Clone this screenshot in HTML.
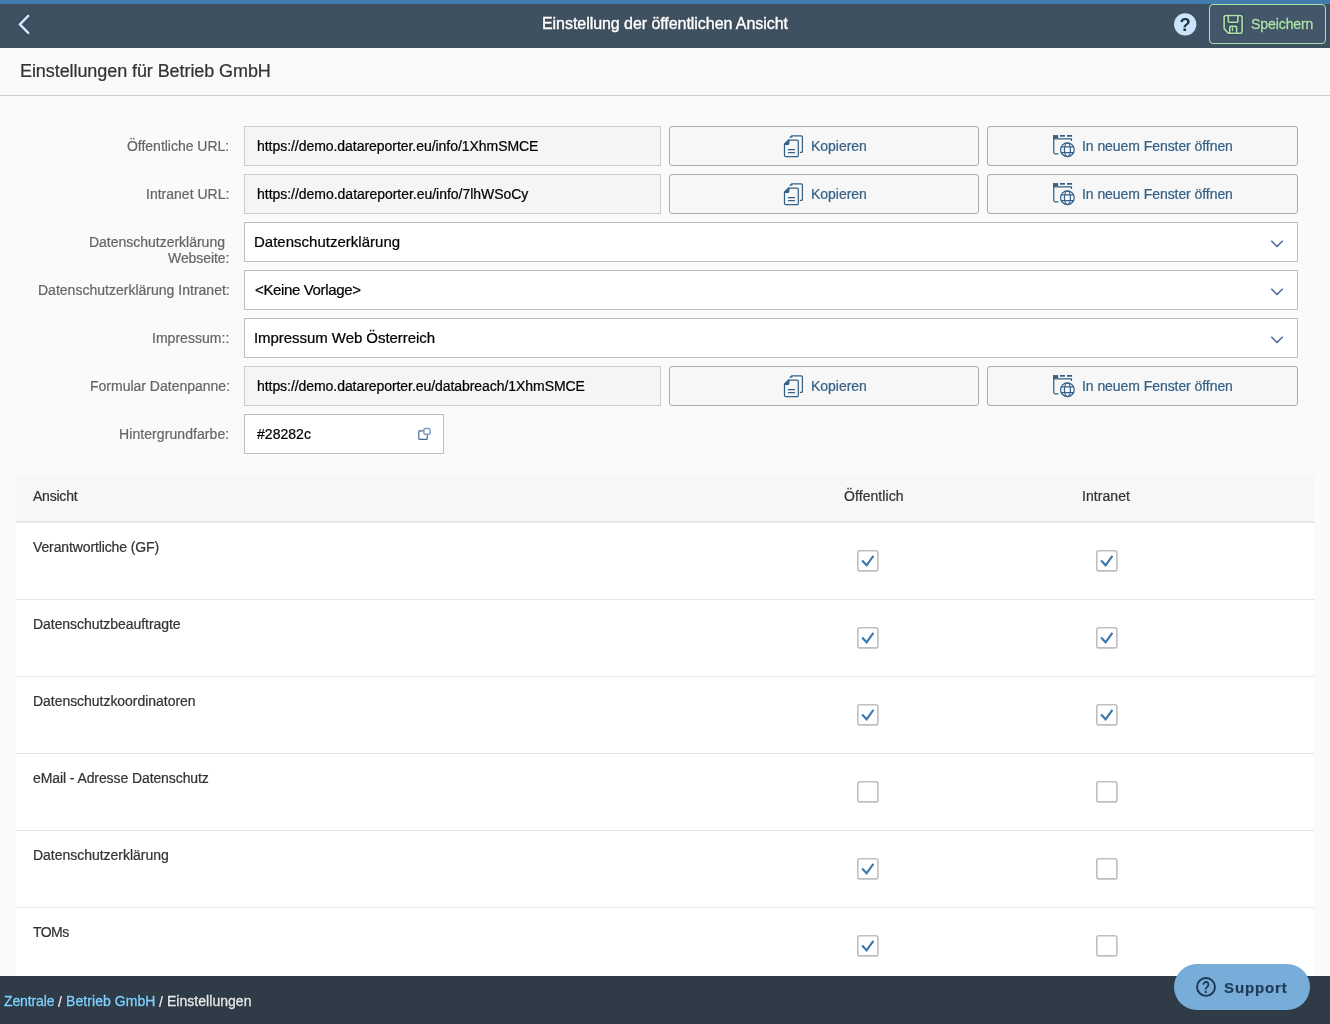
<!DOCTYPE html>
<html lang="de">
<head>
<meta charset="utf-8">
<title>Einstellung der öffentlichen Ansicht</title>
<style>
*{box-sizing:border-box;margin:0;padding:0}
html,body{width:1330px;height:1024px;overflow:hidden;background:#fafafa;font-family:"Liberation Sans",sans-serif;color:#32363a;font-size:14px}
body{position:relative}
.tx{will-change:transform;position:absolute;white-space:nowrap;line-height:20px;font-family:"Liberation Sans",sans-serif}
.tx{-webkit-text-stroke:0.22px currentColor}
#ht{-webkit-text-stroke:0.4px #fff;text-shadow:0 0 2px rgba(0,0,0,.35)}
#f1,#f3,#f5{-webkit-text-stroke:0.3px currentColor;text-shadow:0 0 2px rgba(0,0,0,.3)}
#sv{-webkit-text-stroke:0.3px currentColor;text-shadow:0 0 2px rgba(0,0,0,.35)}
.bx{position:absolute}
svg{position:absolute;overflow:visible}
#topbar{left:0;top:0;width:1330px;height:4px;background:#427cac}
#hbg{left:0;top:4px;width:1330px;height:44px;background:#3f5161}
#save{left:1209px;top:4px;width:117px;height:40px;border:1px solid #abe2ab;border-radius:4px;background:#445669}
#divider{left:0;top:95px;width:1330px;height:1px;background:#cdcdcd}
.inp{left:244px;height:40px;border:1px solid #cccccc;background:#f5f5f5}
.ro{width:417px}
.sel{width:1054px;background:#fff;border-color:#bfbfbf}
.btn{height:40px;border:1px solid #ababab;border-radius:3px;background:#f7f7f7}
.b1{left:669px;width:310px}
.b2{left:987px;width:311px}
#tbl{left:16px;top:474px;width:1298px;height:502px;background:#fff}
#thead{left:16px;top:474px;width:1298px;height:49px;background:#f7f7f7;border-bottom:2px solid #e5e5e5}
.rl{left:16px;width:1298px;height:1px;background:#e5e5e5}
#footer{left:0;top:976px;width:1330px;height:48px;background:#2f3c48}
#support{left:1174px;top:964px;width:136px;height:46px;border-radius:23px;background:#78acd9}
</style>
</head>
<body>
<div class="bx" id="topbar"></div>
<div id="header">
<div class="bx" id="hbg"></div>
<svg id="back" width="32" height="32" viewBox="0 0 32 32" style="left:8px;top:8px;filter:drop-shadow(0 0 1px rgba(0,0,0,.45))"><path d="M20.2 7.9 L11.9 16.4 L20.2 24.9" fill="none" stroke="#cde6ff" stroke-width="2.6" stroke-linecap="round" stroke-linejoin="round"/></svg>
<span class="tx" id="ht" style="left:542.00px;top:14px;font-size:16px;letter-spacing:-0.054px;color:#fff;">Einstellung der öffentlichen Ansicht</span>
<svg id="help" width="32" height="32" viewBox="0 0 32 32" style="left:1169px;top:8px;will-change:transform"><circle cx="16.2" cy="16.35" r="11.15" fill="#cbe4fb"/><text x="16.15" y="23.4" text-anchor="middle" font-family="Liberation Sans, sans-serif" font-weight="bold" font-size="18.4" fill="#22303c">?</text></svg>
<div class="bx" id="save"></div>
<svg id="saveic" width="32" height="32" viewBox="0 0 32 32" style="left:1216px;top:8px;filter:drop-shadow(0 0 1px rgba(0,0,0,.4))" fill="none" stroke="#abe2ab" stroke-width="1.6" stroke-linejoin="round"><path d="M10.1 7.5 H24.1 a2 2 0 0 1 2 2 V23.3 a2 2 0 0 1-2 2 H12.3 L8.1 20.6 V9.5 a2 2 0 0 1 2-2 Z"/><path d="M12.3 7.5 V13.2 a1 1 0 0 0 1 1 H20.9 a1 1 0 0 0 1-1 V7.5"/><path d="M13.75 25.3 V19.4 a1 1 0 0 1 1-1 H19.6 a1 1 0 0 1 1 1 V25.3"/><path d="M16.45 20.2 V22.6" stroke-width="1.3" stroke-linecap="round"/></svg>
<span class="tx" id="sv" style="left:1251.00px;top:14px;font-size:14px;letter-spacing:-0.079px;color:#abe2ab;">Speichern</span>
</div>
<span class="tx" id="pt" style="left:20.00px;top:61px;font-size:18px;letter-spacing:-0.078px;color:#333;">Einstellungen für Betrieb GmbH</span>
<div class="bx" id="divider"></div>
<div id="form">
<span class="tx" id="l1" style="left:127.00px;top:136px;font-size:14px;letter-spacing:-0.022px;color:#666;">Öffentliche URL:</span><div class="bx inp ro" style="top:126px"></div><span class="tx" id="i1" style="left:257.00px;top:136px;font-size:14px;letter-spacing:-0.044px;color:#000;">https://demo.datareporter.eu/info/1XhmSMCE</span>
<div class="bx btn b1" style="top:126px"></div><svg width="32" height="32" viewBox="0 0 32 32" style="left:778px;top:130px" fill="none" stroke="#346187" stroke-width="1.25" stroke-linejoin="round"><path d="M6.5 14.3 L10.8 10 H19.1 a1.2 1.2 0 0 1 1.2 1.2 V25.4 a1.2 1.2 0 0 1-1.2 1.2 H7.7 a1.2 1.2 0 0 1-1.2-1.2 Z"/><path d="M6.6 14.3 L10.9 10 V13.3 a1 1 0 0 1-1 1 Z" fill="#346187"/><path d="M12.1 7.4 L13.9 5.8 H23.2 a1.2 1.2 0 0 1 1.2 1.2 V21.2 a1.2 1.2 0 0 1-1.2 1.2 H22.4" stroke-linecap="round"/><path d="M12 7.5 L14.3 5.5 V7.5 Z" fill="#346187" stroke="none"/><path d="M10.4 19.7 H16.5 M10.4 22.5 H16.5" stroke-linecap="round"/></svg><span class="tx" id="k0" style="left:811.00px;top:136px;font-size:14px;letter-spacing:-0.036px;color:#346187;">Kopieren</span>
<div class="bx btn b2" style="top:126px"></div><svg width="32" height="32" viewBox="0 0 32 32" style="left:1045px;top:128px" fill="none" stroke="#346187" stroke-width="1.25"><path d="M8.75 7.6 V24.6 a1.2 1.2 0 0 0 1.2 1.2 H13" stroke-linecap="round"/><path d="M8.1 7.1 H13.2 V10.3 H8.1 Z" fill="#346187" stroke="none"/><path d="M8.75 10.75 H26.5 V12.4" stroke-linecap="round" stroke-linejoin="round"/><path d="M15 7.95 H19.9 M22 7.95 H27.1" stroke-width="1.7"/><circle cx="22.4" cy="21.7" r="6.8"/><ellipse cx="22.4" cy="21.7" rx="3" ry="6.8"/><path d="M16.4 18.8 H28.4 M16.4 24.5 H28.4"/></svg><span class="tx" id="n0" style="left:1082.00px;top:136px;font-size:14px;letter-spacing:-0.063px;color:#346187;">In neuem Fenster öffnen</span>
<span class="tx" id="l2" style="left:146.00px;top:184px;font-size:14px;letter-spacing:0.010px;color:#666;">Intranet URL:</span><div class="bx inp ro" style="top:174px"></div><span class="tx" id="i2" style="left:257.00px;top:184px;font-size:14px;letter-spacing:-0.025px;color:#000;">https://demo.datareporter.eu/info/7lhWSoCy</span>
<div class="bx btn b1" style="top:174px"></div><svg width="32" height="32" viewBox="0 0 32 32" style="left:778px;top:178px" fill="none" stroke="#346187" stroke-width="1.25" stroke-linejoin="round"><path d="M6.5 14.3 L10.8 10 H19.1 a1.2 1.2 0 0 1 1.2 1.2 V25.4 a1.2 1.2 0 0 1-1.2 1.2 H7.7 a1.2 1.2 0 0 1-1.2-1.2 Z"/><path d="M6.6 14.3 L10.9 10 V13.3 a1 1 0 0 1-1 1 Z" fill="#346187"/><path d="M12.1 7.4 L13.9 5.8 H23.2 a1.2 1.2 0 0 1 1.2 1.2 V21.2 a1.2 1.2 0 0 1-1.2 1.2 H22.4" stroke-linecap="round"/><path d="M12 7.5 L14.3 5.5 V7.5 Z" fill="#346187" stroke="none"/><path d="M10.4 19.7 H16.5 M10.4 22.5 H16.5" stroke-linecap="round"/></svg><span class="tx" id="k1" style="left:811.00px;top:184px;font-size:14px;letter-spacing:-0.036px;color:#346187;">Kopieren</span>
<div class="bx btn b2" style="top:174px"></div><svg width="32" height="32" viewBox="0 0 32 32" style="left:1045px;top:176px" fill="none" stroke="#346187" stroke-width="1.25"><path d="M8.75 7.6 V24.6 a1.2 1.2 0 0 0 1.2 1.2 H13" stroke-linecap="round"/><path d="M8.1 7.1 H13.2 V10.3 H8.1 Z" fill="#346187" stroke="none"/><path d="M8.75 10.75 H26.5 V12.4" stroke-linecap="round" stroke-linejoin="round"/><path d="M15 7.95 H19.9 M22 7.95 H27.1" stroke-width="1.7"/><circle cx="22.4" cy="21.7" r="6.8"/><ellipse cx="22.4" cy="21.7" rx="3" ry="6.8"/><path d="M16.4 18.8 H28.4 M16.4 24.5 H28.4"/></svg><span class="tx" id="n1" style="left:1082.00px;top:184px;font-size:14px;letter-spacing:-0.063px;color:#346187;">In neuem Fenster öffnen</span>
<span class="tx" id="l3a" style="left:89.00px;top:232px;font-size:14px;letter-spacing:-0.013px;color:#666;">Datenschutzerklärung</span><span class="tx" id="l3b" style="left:168.00px;top:248px;font-size:14px;letter-spacing:-0.079px;color:#666;">Webseite:</span><div class="bx inp sel" style="top:222px"></div><span class="tx" id="s3" style="left:254.00px;top:232px;font-size:15px;letter-spacing:0.009px;color:#000;">Datenschutzerklärung</span><svg width="16" height="12" viewBox="0 0 16 12" style="left:1269px;top:238px"><path d="M2.3 2.7 L8 8.4 L13.7 2.7" fill="none" stroke="#3f6690" stroke-width="1.4"/></svg>
<span class="tx" id="l4" style="left:38.00px;top:280px;font-size:14px;letter-spacing:0.011px;color:#666;">Datenschutzerklärung Intranet:</span><div class="bx inp sel" style="top:270px"></div><span class="tx" id="s4" style="left:255.00px;top:280px;font-size:15px;letter-spacing:-0.360px;color:#000;">&lt;Keine Vorlage&gt;</span><svg width="16" height="12" viewBox="0 0 16 12" style="left:1269px;top:286px"><path d="M2.3 2.7 L8 8.4 L13.7 2.7" fill="none" stroke="#3f6690" stroke-width="1.4"/></svg>
<span class="tx" id="l5" style="left:152.00px;top:328px;font-size:14px;letter-spacing:0.030px;color:#666;">Impressum::</span><div class="bx inp sel" style="top:318px"></div><span class="tx" id="s5" style="left:254.00px;top:328px;font-size:15px;letter-spacing:-0.052px;color:#000;">Impressum Web Österreich</span><svg width="16" height="12" viewBox="0 0 16 12" style="left:1269px;top:334px"><path d="M2.3 2.7 L8 8.4 L13.7 2.7" fill="none" stroke="#3f6690" stroke-width="1.4"/></svg>
<span class="tx" id="l6" style="left:90.00px;top:376px;font-size:14px;letter-spacing:-0.003px;color:#666;">Formular Datenpanne:</span><div class="bx inp ro" style="top:366px"></div><span class="tx" id="i6" style="left:257.00px;top:376px;font-size:14px;letter-spacing:-0.060px;color:#000;">https://demo.datareporter.eu/databreach/1XhmSMCE</span>
<div class="bx btn b1" style="top:366px"></div><svg width="32" height="32" viewBox="0 0 32 32" style="left:778px;top:370px" fill="none" stroke="#346187" stroke-width="1.25" stroke-linejoin="round"><path d="M6.5 14.3 L10.8 10 H19.1 a1.2 1.2 0 0 1 1.2 1.2 V25.4 a1.2 1.2 0 0 1-1.2 1.2 H7.7 a1.2 1.2 0 0 1-1.2-1.2 Z"/><path d="M6.6 14.3 L10.9 10 V13.3 a1 1 0 0 1-1 1 Z" fill="#346187"/><path d="M12.1 7.4 L13.9 5.8 H23.2 a1.2 1.2 0 0 1 1.2 1.2 V21.2 a1.2 1.2 0 0 1-1.2 1.2 H22.4" stroke-linecap="round"/><path d="M12 7.5 L14.3 5.5 V7.5 Z" fill="#346187" stroke="none"/><path d="M10.4 19.7 H16.5 M10.4 22.5 H16.5" stroke-linecap="round"/></svg><span class="tx" id="k2" style="left:811.00px;top:376px;font-size:14px;letter-spacing:-0.036px;color:#346187;">Kopieren</span>
<div class="bx btn b2" style="top:366px"></div><svg width="32" height="32" viewBox="0 0 32 32" style="left:1045px;top:368px" fill="none" stroke="#346187" stroke-width="1.25"><path d="M8.75 7.6 V24.6 a1.2 1.2 0 0 0 1.2 1.2 H13" stroke-linecap="round"/><path d="M8.1 7.1 H13.2 V10.3 H8.1 Z" fill="#346187" stroke="none"/><path d="M8.75 10.75 H26.5 V12.4" stroke-linecap="round" stroke-linejoin="round"/><path d="M15 7.95 H19.9 M22 7.95 H27.1" stroke-width="1.7"/><circle cx="22.4" cy="21.7" r="6.8"/><ellipse cx="22.4" cy="21.7" rx="3" ry="6.8"/><path d="M16.4 18.8 H28.4 M16.4 24.5 H28.4"/></svg><span class="tx" id="n2" style="left:1082.00px;top:376px;font-size:14px;letter-spacing:-0.063px;color:#346187;">In neuem Fenster öffnen</span>
<span class="tx" id="l7" style="left:119.00px;top:424px;font-size:14px;letter-spacing:0.078px;color:#666;">Hintergrundfarbe:</span><div class="bx inp" style="top:414px;width:200px;background:#fff;border-color:#bfbfbf"></div><span class="tx" id="i7" style="left:257.00px;top:424px;font-size:14px;letter-spacing:0.031px;color:#000;">#28282c</span>
<svg width="20" height="20" viewBox="0 0 20 20" style="left:414px;top:424px" fill="none"><path d="M9 6.9 H5.6 a0.8 0.8 0 0 0-0.8 0.8 V14.5 a0.8 0.8 0 0 0 0.8 0.8 H12.5 a0.8 0.8 0 0 0 0.8-0.8 V11.2" stroke="#3f6690" stroke-width="1.15" stroke-linecap="round"/><rect x="9.9" y="4.4" width="6.1" height="5.8" rx="1.3" stroke="#7f9ec0" stroke-width="1.5"/></svg>
</div>
<div id="table">
<div class="bx" id="tbl"></div><div class="bx" id="thead"></div>
<span class="tx" id="th1" style="left:33.00px;top:486px;font-size:14px;letter-spacing:-0.219px;color:#333;">Ansicht</span><span class="tx" id="th2" style="left:844.00px;top:486px;font-size:14px;letter-spacing:0.077px;color:#333;">Öffentlich</span><span class="tx" id="th3" style="left:1082.00px;top:486px;font-size:14px;letter-spacing:0.071px;color:#333;">Intranet</span>
<span class="tx" id="r1" style="left:33.00px;top:537px;font-size:14px;letter-spacing:-0.118px;color:#333;">Verantwortliche (GF)</span><svg class="cbx" width="22" height="22" viewBox="0 0 22 22" style="left:857.1px;top:550px"><rect x="0.8" y="0.8" width="20.1" height="20.1" rx="2" fill="#fff" stroke="#bfbfbf" stroke-width="1.6"/><path d="M5.1 10.6 L9.6 15.3 L16.4 5.8" fill="none" stroke="#3f78ac" stroke-width="2.2"/></svg><svg class="cbx" width="22" height="22" viewBox="0 0 22 22" style="left:1096.1px;top:550px"><rect x="0.8" y="0.8" width="20.1" height="20.1" rx="2" fill="#fff" stroke="#bfbfbf" stroke-width="1.6"/><path d="M5.1 10.6 L9.6 15.3 L16.4 5.8" fill="none" stroke="#3f78ac" stroke-width="2.2"/></svg><div class="bx rl" style="top:599px"></div>
<span class="tx" id="r2" style="left:33.00px;top:614px;font-size:14px;letter-spacing:-0.050px;color:#333;">Datenschutzbeauftragte</span><svg class="cbx" width="22" height="22" viewBox="0 0 22 22" style="left:857.1px;top:627px"><rect x="0.8" y="0.8" width="20.1" height="20.1" rx="2" fill="#fff" stroke="#bfbfbf" stroke-width="1.6"/><path d="M5.1 10.6 L9.6 15.3 L16.4 5.8" fill="none" stroke="#3f78ac" stroke-width="2.2"/></svg><svg class="cbx" width="22" height="22" viewBox="0 0 22 22" style="left:1096.1px;top:627px"><rect x="0.8" y="0.8" width="20.1" height="20.1" rx="2" fill="#fff" stroke="#bfbfbf" stroke-width="1.6"/><path d="M5.1 10.6 L9.6 15.3 L16.4 5.8" fill="none" stroke="#3f78ac" stroke-width="2.2"/></svg><div class="bx rl" style="top:676px"></div>
<span class="tx" id="r3" style="left:33.00px;top:691px;font-size:14px;letter-spacing:-0.039px;color:#333;">Datenschutzkoordinatoren</span><svg class="cbx" width="22" height="22" viewBox="0 0 22 22" style="left:857.1px;top:704px"><rect x="0.8" y="0.8" width="20.1" height="20.1" rx="2" fill="#fff" stroke="#bfbfbf" stroke-width="1.6"/><path d="M5.1 10.6 L9.6 15.3 L16.4 5.8" fill="none" stroke="#3f78ac" stroke-width="2.2"/></svg><svg class="cbx" width="22" height="22" viewBox="0 0 22 22" style="left:1096.1px;top:704px"><rect x="0.8" y="0.8" width="20.1" height="20.1" rx="2" fill="#fff" stroke="#bfbfbf" stroke-width="1.6"/><path d="M5.1 10.6 L9.6 15.3 L16.4 5.8" fill="none" stroke="#3f78ac" stroke-width="2.2"/></svg><div class="bx rl" style="top:753px"></div>
<span class="tx" id="r4" style="left:33.00px;top:768px;font-size:14px;letter-spacing:-0.091px;color:#333;">eMail - Adresse Datenschutz</span><svg class="cbx" width="22" height="22" viewBox="0 0 22 22" style="left:857.1px;top:781px"><rect x="0.8" y="0.8" width="20.1" height="20.1" rx="2" fill="#fff" stroke="#bfbfbf" stroke-width="1.6"/></svg><svg class="cbx" width="22" height="22" viewBox="0 0 22 22" style="left:1096.1px;top:781px"><rect x="0.8" y="0.8" width="20.1" height="20.1" rx="2" fill="#fff" stroke="#bfbfbf" stroke-width="1.6"/></svg><div class="bx rl" style="top:830px"></div>
<span class="tx" id="r5" style="left:33.00px;top:845px;font-size:14px;letter-spacing:-0.022px;color:#333;">Datenschutzerklärung</span><svg class="cbx" width="22" height="22" viewBox="0 0 22 22" style="left:857.1px;top:858px"><rect x="0.8" y="0.8" width="20.1" height="20.1" rx="2" fill="#fff" stroke="#bfbfbf" stroke-width="1.6"/><path d="M5.1 10.6 L9.6 15.3 L16.4 5.8" fill="none" stroke="#3f78ac" stroke-width="2.2"/></svg><svg class="cbx" width="22" height="22" viewBox="0 0 22 22" style="left:1096.1px;top:858px"><rect x="0.8" y="0.8" width="20.1" height="20.1" rx="2" fill="#fff" stroke="#bfbfbf" stroke-width="1.6"/></svg><div class="bx rl" style="top:907px"></div>
<span class="tx" id="r6" style="left:33.00px;top:922px;font-size:14px;letter-spacing:-0.569px;color:#333;">TOMs</span><svg class="cbx" width="22" height="22" viewBox="0 0 22 22" style="left:857.1px;top:935px"><rect x="0.8" y="0.8" width="20.1" height="20.1" rx="2" fill="#fff" stroke="#bfbfbf" stroke-width="1.6"/><path d="M5.1 10.6 L9.6 15.3 L16.4 5.8" fill="none" stroke="#3f78ac" stroke-width="2.2"/></svg><svg class="cbx" width="22" height="22" viewBox="0 0 22 22" style="left:1096.1px;top:935px"><rect x="0.8" y="0.8" width="20.1" height="20.1" rx="2" fill="#fff" stroke="#bfbfbf" stroke-width="1.6"/></svg>
</div>
<div class="bx" id="footer"></div><span class="tx" id="f1" style="left:4.00px;top:991px;font-size:14px;letter-spacing:-0.127px;color:#7ed0ff;">Zentrale</span><span class="tx" id="f2" style="left:58.00px;top:992px;font-size:14px;letter-spacing:0.000px;color:#e8e8e8;">/</span><span class="tx" id="f3" style="left:66.00px;top:991px;font-size:14px;letter-spacing:0.068px;color:#7ed0ff;">Betrieb GmbH</span><span class="tx" id="f4" style="left:159.00px;top:992px;font-size:14px;letter-spacing:0.000px;color:#e8e8e8;">/</span><span class="tx" id="f5" style="left:167.00px;top:991px;font-size:14px;letter-spacing:0.031px;color:#e8e8e8;">Einstellungen</span>
<div class="bx" id="support"></div><svg id="supic" width="32" height="32" viewBox="0 0 32 32" style="left:1190px;top:971px;will-change:transform"><circle cx="16" cy="15.9" r="8.95" fill="none" stroke="#1d3650" stroke-width="1.9"/><text transform="translate(15.9 21.85) scale(0.9 1.09)" text-anchor="middle" font-family="Liberation Sans, sans-serif" font-weight="bold" font-size="14.6" fill="#1d3650">?</text></svg><span class="tx" id="sp" style="left:1224.00px;top:978px;font-size:15px;letter-spacing:0.885px;color:#1f3b57;font-weight:bold;">Support</span>
</body>
</html>
